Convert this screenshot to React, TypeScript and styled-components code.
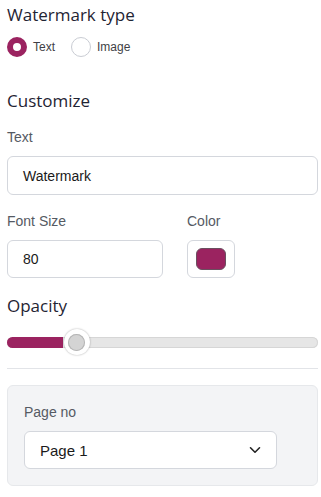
import * as React from 'react';
import styled, { createGlobalStyle } from 'styled-components';

const GlobalStyle = createGlobalStyle`
    body {
        margin: 0;
        background: #ffffff;
        font-family: "Liberation Sans", Arial, sans-serif;
    }
`;

const Panel = styled.div`
    display: flex;
    flex-direction: column;
    padding: 0 3px 0 7px;
    width: 311px;
`;

const SectionTitle = styled.h2<{ $gap: number }>`
    margin: ${p => p.$gap}px 0 0;
    font-family: "Open Sans", sans-serif;
    font-size: 17px;
    font-weight: 500;
    line-height: 24px;
    color: #1f2433;
`;

const RadioGroup = styled.div`
    display: flex;
    align-items: center;
    gap: 16px;
    margin-top: 10px;
`;

const RadioOption = styled.label`
    display: flex;
    align-items: center;
    gap: 6px;
    font-size: 12px;
    color: #3f3f46;
    cursor: pointer;
`;

const RadioDot = styled.span<{ $checked?: boolean }>`
    box-sizing: border-box;
    width: 20px;
    height: 20px;
    border-radius: 50%;
    border: ${p => (p.$checked ? '6px solid #9b2360' : '1px solid #c9ccd3')};
    background: #ffffff;
`;

const FieldLabel = styled.div<{ $gap: number }>`
    margin-top: ${p => p.$gap}px;
    font-size: 14px;
    line-height: 16px;
    color: #555a63;
`;

const Box = styled.div<{ $height: number }>`
    box-sizing: border-box;
    display: flex;
    align-items: center;
    height: ${p => p.$height}px;
    margin-top: 11px;
    padding: 0 15px;
    border: 1px solid #d4d7dd;
    border-radius: 6px;
    background: #ffffff;
    font-size: 14px;
    color: #1a1a1a;
`;

const FieldRow = styled.div`
    display: grid;
    grid-template-columns: 156px 48px;
    column-gap: 24px;
    margin-top: 18px;
`;

const Field = styled.div`
    display: flex;
    flex-direction: column;
`;

const ColorBox = styled(Box)`
    justify-content: center;
    padding: 0;
`;

const Swatch = styled.span<{ $color: string }>`
    box-sizing: border-box;
    width: 30px;
    height: 22px;
    border-radius: 6px;
    border: 1px solid #6b5060;
    background: ${p => p.$color};
`;

const Slider = styled.div`
    position: relative;
    display: flex;
    align-items: center;
    height: 26px;
    margin-top: 11px;
`;

const Track = styled.div`
    position: relative;
    width: 100%;
    height: 11px;
    border-radius: 6px;
    background: #e6e6e6;
    box-shadow: inset 0 0 0 1px #d6d6d6;
    overflow: hidden;
`;

const Fill = styled.div`
    height: 100%;
    background: #9b2360;
`;

const Thumb = styled.div`
    position: absolute;
    top: 0;
    box-sizing: border-box;
    width: 26px;
    height: 26px;
    margin-left: -13px;
    border-radius: 50%;
    background: #ffffff;
    box-shadow: 0 0 2px rgba(0, 0, 0, 0.35);
    display: flex;
    align-items: center;
    justify-content: center;

    &::after {
        content: '';
        width: 17px;
        height: 17px;
        border-radius: 50%;
        background: #d4d4d4;
        box-shadow: inset 0 0 0 1px #b5b5b5;
    }
`;

const Divider = styled.hr`
    margin: 13px 0 0;
    border: 0;
    border-top: 1px solid #e2e4e8;
`;

const Card = styled.div`
    margin-top: 16px;
    padding: 18px 40px 16px 16px;
    border: 1px solid #e6e8eb;
    border-radius: 6px;
    background: #f3f4f6;
`;

const SelectBox = styled(Box)`
    justify-content: space-between;
    padding: 0 15px 0 15px;
    font-size: 15px;
`;

const Chevron = () => (
    <svg width="12" height="8" viewBox="0 0 12 8" fill="none">
        <path d="M1.5 1.8 6 6.2l4.5-4.4" stroke="#222" strokeWidth="1.6" strokeLinecap="round" strokeLinejoin="round" />
    </svg>
);

const App: React.FunctionComponent = () => {
    const opacity = 18;
    return (
        <>
            <GlobalStyle />
            <Panel>
                <SectionTitle $gap={3}>Watermark type</SectionTitle>
                <RadioGroup>
                    <RadioOption><RadioDot $checked />Text</RadioOption>
                    <RadioOption><RadioDot />Image</RadioOption>
                </RadioGroup>

                <SectionTitle $gap={32}>Customize</SectionTitle>
                <FieldLabel $gap={16}>Text</FieldLabel>
                <Box $height={39}>Watermark</Box>

                <FieldRow>
                    <Field>
                        <FieldLabel $gap={0}>Font Size</FieldLabel>
                        <Box $height={38}>80</Box>
                    </Field>
                    <Field>
                        <FieldLabel $gap={0}>Color</FieldLabel>
                        <ColorBox $height={38}><Swatch $color="#9b2360" /></ColorBox>
                    </Field>
                </FieldRow>

                <SectionTitle $gap={16}>Opacity</SectionTitle>
                <Slider>
                    <Track><Fill style={{ width: `${opacity}%` }} /></Track>
                    <Thumb style={{ left: `${opacity + 4.5}%` }} />
                </Slider>
                <Divider />

                <Card>
                    <FieldLabel $gap={0}>Page no</FieldLabel>
                    <SelectBox $height={38}>Page 1<Chevron /></SelectBox>
                </Card>
            </Panel>
        </>
    );
};

export default App;
